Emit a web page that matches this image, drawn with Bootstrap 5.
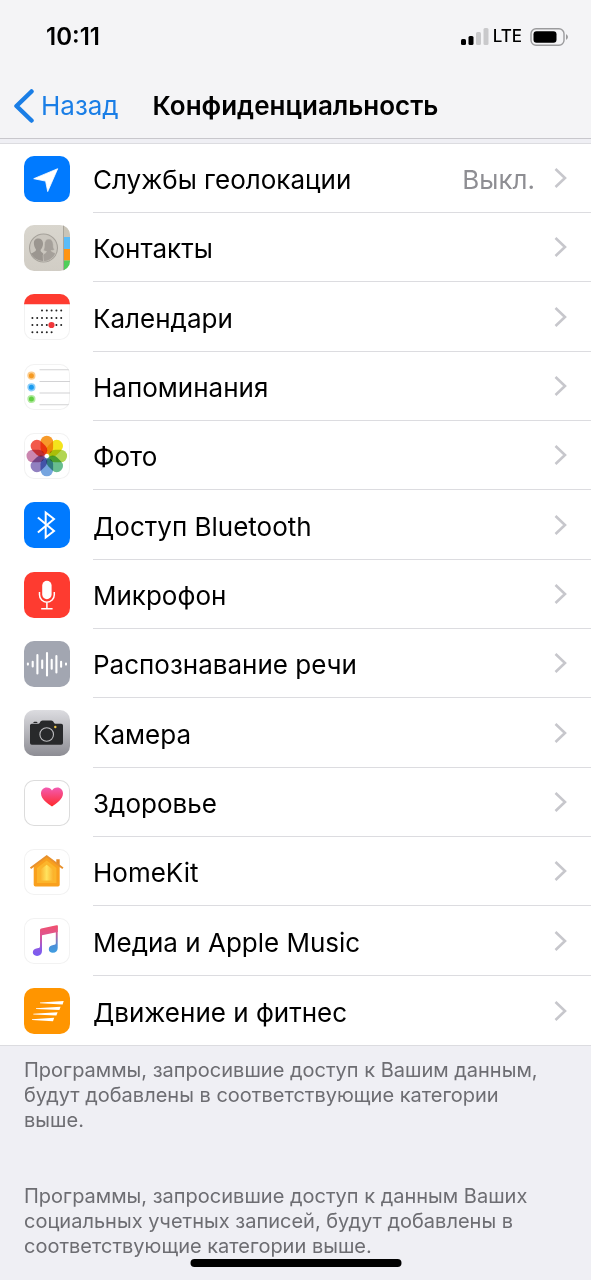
<!DOCTYPE html>
<html lang="ru">
<head>
<meta charset="utf-8">
<meta name="viewport" content="width=device-width, initial-scale=1">
<title>Конфиденциальность</title>
<link href="https://cdn.jsdelivr.net/npm/bootstrap@5.3.0/dist/css/bootstrap.min.css" rel="stylesheet">
<style>
  body { font-family: Inter, "Liberation Sans", sans-serif; background: #efeff4; color: #000; }
  .top-bar { background: #f4f4f6; border-bottom: 1px solid #c8c7cc; }
  .status { height: 73px; padding: 0 22px 0 46px; font-size: 24px; font-weight: 600; }
  .network { font-size: 17px; font-weight: 500; }
  .title-bar { display: grid; grid-template-columns: 1fr auto 1fr; height: 65px; padding: 0 14px; }
  .back { color: #1a7ee6; font-size: 26px; gap: 7px; }
  .title-bar h1 { font-size: 26px; font-weight: 600; }
  .settings { margin-top: 4px; border-top: 1px solid #dcdce0; border-bottom: 1px solid #dcdce0; background: #fff; }
  .settings a { height: 69px; padding-left: 24px; gap: 23px; font-size: 26px; color: #000; }
  .settings li:nth-child(3n) a { height: 70px; }
  .settings svg { display: block; }
  .entry { border-bottom: 1px solid #dcdce0; padding-right: 24px; gap: 19px; }
  .entry > span { padding-top: 3px; }
  li:last-child .entry { border-bottom: 0; }
  .state { color: #8e8e93; }
  .app-icon { width: 46px; height: 46px; border-radius: 10px; overflow: hidden; }
  .outlined { box-shadow: inset 0 0 0 1px #f2f2f2; }
  .outlined-dark { box-shadow: inset 0 0 0 1px #dcdcdc; }
  .notes { padding: 12px 40px 20px 24px; font-size: 20px; line-height: 25px; color: #6d6d72; }
  .notes p { margin-bottom: 51px; }
  .notes p:last-child { margin-bottom: 0; }
  .home-indicator { bottom: 13px; width: 211px; height: 8px; background: #000; }
</style>
</head>
<body>
<header class="top-bar">
  <div class="status d-flex align-items-center justify-content-between">
    <time>10:11</time>
    <div class="d-flex align-items-center gap-1">
      <svg width="28" height="18" viewBox="0 0 28 18" aria-hidden="true">
        <rect x="0" y="11" width="5" height="6" rx="1.5"/><rect x="7.500" y="8" width="5" height="9" rx="1.500"/>
        <g fill="#c9c9cb"><rect x="15" y="4" width="5" height="13" rx="1.500"/><rect x="22.500" y="0" width="5" height="17" rx="1.500"/></g>
      </svg>
      <span class="network">LTE</span>
      <svg class="ms-1" width="39" height="18" viewBox="0 0 39 18" aria-hidden="true">
        <rect x="1" y=".700" width="33" height="16.500" rx="5" fill="none" stroke="#9b9b9d" stroke-width="1.400"/>
        <rect x="3.500" y="3.200" width="23" height="11.500" rx="3"/>
        <path d="M36 6q4 3 0 6z" fill="#9b9b9d"/>
      </svg>
    </div>
  </div>
  <nav class="title-bar align-items-center">
    <a href="#" class="back d-flex align-items-center text-decoration-none">
      <svg width="20" height="34" viewBox="0 0 20 34" fill="none" stroke="#1a7ee6" stroke-width="4.500" stroke-linecap="round" stroke-linejoin="round" aria-hidden="true"><path d="M17.500 2.500 2.500 17l15 14.500"/></svg>
      <span>Назад</span>
    </a>
    <h1 class="m-0">Конфиденциальность</h1>
    <span></span>
  </nav>
</header>

<svg width="0" height="0" class="position-absolute" aria-hidden="true">
  <symbol id="chevron" viewBox="0 0 13 20"><path d="M1.500 1 11 10l-9.500 9" fill="none" stroke="#c7c7cc" stroke-width="2.600"/></symbol>
</svg>

<main>
<ul class="settings list-unstyled mb-0">
  <li><a href="#" class="d-flex align-items-center text-decoration-none">
    <svg class="app-icon" viewBox="0 0 46 46"><rect width="46" height="46" fill="#007aff"/><path d="M33.700 12.700 23.700 35.600 21.600 25.100 9.700 22.700z" fill="#fff" stroke="#fff" stroke-width=".8" stroke-linejoin="round"/></svg>
    <span class="entry d-flex align-items-center flex-grow-1 align-self-stretch"><span class="flex-grow-1">Службы геолокации</span><span class="state">Выкл.</span><svg width="13" height="20"><use href="#chevron"/></svg></span></a></li>
  <li><a href="#" class="d-flex align-items-center text-decoration-none">
    <svg class="app-icon" viewBox="0 0 46 46"><defs><linearGradient id="paper" x2="0" y2="1"><stop stop-color="#d9d6ce"/><stop offset="1" stop-color="#d1cdc5"/></linearGradient></defs>
      <rect width="46" height="46" fill="url(#paper)"/><path d="M40 0h6v12h-6z" fill="#c9c4b7"/><path d="M40 12h6v12h-6z" fill="#5bbcf8"/><path d="M40 24h6v11.500h-6z" fill="#ff9412"/><path d="M40 35.500h6V46h-6z" fill="#4fce5a"/><path d="M39.500 0v46" stroke="#aaa69c" stroke-width="1"/>
      <circle cx="19.500" cy="23" r="14" fill="#cbc7bf" stroke="#a5a19a" stroke-width="1.100"/>
      <path d="M14.500 13.500c-4 0-5 3-4.500 6 .3 2.500 1.500 4 2 5 .2 2-2.500 2.600-5 4 2 4 6 7 12 7.500l.5-7c-1.500-2-3-2-3-4 1.500-1.500 2.800-4 2.500-7-.3-3-2-4.500-4.500-4.500z" fill="#9b9690"/>
      <path d="M25 14c-3 0-4.500 2-4.500 5.500 0 3-.5 4.500-1 6l3 1c-.2 1.500-2.500 2-3.500 3.500l.5 6.500c6-.5 10-3.500 12-8-1.500-1.200-4-1.500-4.500-3 2 0 3-.5 3.500-1-1.500-1.500-1.200-3-1.300-5C29 16 27.500 14 25 14z" fill="#a5a09a" stroke="#cbc7bf" stroke-width=".5"/></svg>
    <span class="entry d-flex align-items-center flex-grow-1 align-self-stretch"><span class="flex-grow-1">Контакты</span><svg width="13" height="20"><use href="#chevron"/></svg></span></a></li>
  <li><a href="#" class="d-flex align-items-center text-decoration-none">
    <svg class="app-icon outlined" viewBox="0 0 46 46"><path d="M0 0h46v10.300H0z" fill="#fe3b30"/>
      <g fill="none" stroke="#222" stroke-width="2" stroke-linecap="round" stroke-dasharray="0 4.800"><path d="M18 16.600h20"/><path d="M8.400 24h29.500"/><path d="M8.400 31h29.500"/><path d="M8.400 38.300h20"/></g><circle cx="27.500" cy="31" r="3.100" fill="#f0373a"/></svg>
    <span class="entry d-flex align-items-center flex-grow-1 align-self-stretch"><span class="flex-grow-1">Календари</span><svg width="13" height="20"><use href="#chevron"/></svg></span></a></li>
  <li><a href="#" class="d-flex align-items-center text-decoration-none">
    <svg class="app-icon outlined" viewBox="0 0 46 46"><path d="M15.500 5.700H46M15.500 17.500H46M15.500 29H46M15.500 40.700H46" stroke="#d2d2d4" stroke-width="1.100"/>
      <g stroke-width="1.600"><circle cx="7.400" cy="11.700" r="3.300" fill="#f59a23" stroke="#fbcb8b"/><circle cx="7.400" cy="23.300" r="3.300" fill="#1c9cf0" stroke="#8bcdf8"/><circle cx="7.400" cy="35" r="3.300" fill="#62d043" stroke="#b2e9a0"/></g></svg>
    <span class="entry d-flex align-items-center flex-grow-1 align-self-stretch"><span class="flex-grow-1">Напоминания</span><svg width="13" height="20"><use href="#chevron"/></svg></span></a></li>
  <li><a href="#" class="d-flex align-items-center text-decoration-none">
    <svg class="app-icon outlined" viewBox="0 0 46 46"><defs><rect id="petal" x="-6.300" y="-20.300" width="12.600" height="18.300" rx="6.300"/></defs>
      <g transform="translate(22.800 23)"><use href="#petal" fill="#f79a2a" style="mix-blend-mode:multiply"/><use href="#petal" fill="#f4e41c" transform="rotate(45)" style="mix-blend-mode:multiply"/><use href="#petal" fill="#b2d552" transform="rotate(90)" style="mix-blend-mode:multiply"/><use href="#petal" fill="#68bd8e" transform="rotate(135)" style="mix-blend-mode:multiply"/><use href="#petal" fill="#76a5df" transform="rotate(180)" style="mix-blend-mode:multiply"/><use href="#petal" fill="#9180c0" transform="rotate(225)" style="mix-blend-mode:multiply"/><use href="#petal" fill="#cb86af" transform="rotate(270)" style="mix-blend-mode:multiply"/><use href="#petal" fill="#f2594b" transform="rotate(315)" style="mix-blend-mode:multiply"/><circle r="1.500" fill="#fff"/></g></svg>
    <span class="entry d-flex align-items-center flex-grow-1 align-self-stretch"><span class="flex-grow-1">Фото</span><svg width="13" height="20"><use href="#chevron"/></svg></span></a></li>
  <li><a href="#" class="d-flex align-items-center text-decoration-none">
    <svg class="app-icon" viewBox="0 0 46 46"><rect width="46" height="46" fill="#007aff"/><path d="M13.900 15.500 30 29l-8.300 6.500V10.500L30 17 13.900 30.500" fill="none" stroke="#fff" stroke-width="2"/></svg>
    <span class="entry d-flex align-items-center flex-grow-1 align-self-stretch"><span class="flex-grow-1">Доступ Bluetooth</span><svg width="13" height="20"><use href="#chevron"/></svg></span></a></li>
  <li><a href="#" class="d-flex align-items-center text-decoration-none">
    <svg class="app-icon" viewBox="0 0 46 46"><rect width="46" height="46" fill="#fe3b30"/><rect x="18.200" y="8.800" width="9.400" height="18.400" rx="4.700" fill="#fff"/><path d="M15.500 20v2.800a7.400 7.400 0 0 0 14.800 0V20M22.900 30v6.500M17.200 36.800h11.400" fill="none" stroke="#fff" stroke-width="1.500"/></svg>
    <span class="entry d-flex align-items-center flex-grow-1 align-self-stretch"><span class="flex-grow-1">Микрофон</span><svg width="13" height="20"><use href="#chevron"/></svg></span></a></li>
  <li><a href="#" class="d-flex align-items-center text-decoration-none">
    <svg class="app-icon" viewBox="0 0 46 46"><rect width="46" height="46" fill="#a2a6b1"/><path d="M3.900 22.600v1M8.700 20.800v4.600M13.400 14v18.500M18.200 19.500v7.500M23 12v22.500M27.700 18.800v9M32.400 15v16.500M37.100 20.800v5M42 22.600v1" fill="none" stroke="#fff" stroke-width="2.100" stroke-linecap="round"/></svg>
    <span class="entry d-flex align-items-center flex-grow-1 align-self-stretch"><span class="flex-grow-1">Распознавание речи</span><svg width="13" height="20"><use href="#chevron"/></svg></span></a></li>
  <li><a href="#" class="d-flex align-items-center text-decoration-none">
    <svg class="app-icon" viewBox="0 0 46 46"><defs><linearGradient id="steel" x2="0" y2="1"><stop stop-color="#dcdce0"/><stop offset="1" stop-color="#8d8d94"/></linearGradient></defs>
      <rect width="46" height="46" fill="url(#steel)"/><path d="M6 15.500q0-1.800 1.800-1.800h6.700c1.500 0 1.500-3.200 4-3.200h8.700c2.500 0 2.500 3.200 4 3.200h6q1.800 0 1.800 1.800v17.400q0 1.800-1.800 1.800H7.800Q6 34.700 6 32.900zM9.300 13q0-1.200 1.200-1.200h1.800q1.200 0 1.200 1.200z" fill="#28292b"/><circle cx="22.700" cy="24.500" r="6.800" fill="none" stroke="#bdbdc0" stroke-width="1.100"/><circle cx="31.300" cy="17" r="1.200" fill="#efc84a"/></svg>
    <span class="entry d-flex align-items-center flex-grow-1 align-self-stretch"><span class="flex-grow-1">Камера</span><svg width="13" height="20"><use href="#chevron"/></svg></span></a></li>
  <li><a href="#" class="d-flex align-items-center text-decoration-none">
    <svg class="app-icon outlined-dark" viewBox="0 0 46 46"><defs><linearGradient id="heart" x2="0" y2="1"><stop stop-color="#f35bb2"/><stop offset="1" stop-color="#ff2a2c"/></linearGradient></defs>
      <path d="M28 26.400c-4.500-3-11-7.500-11-13 0-3.500 2.500-6 5.700-6 2.300 0 4.300 1.200 5.300 3 1-1.800 3-3 5.300-3 3.200 0 5.700 2.500 5.700 6 0 5.500-6.500 10-11 13z" fill="url(#heart)"/></svg>
    <span class="entry d-flex align-items-center flex-grow-1 align-self-stretch"><span class="flex-grow-1">Здоровье</span><svg width="13" height="20"><use href="#chevron"/></svg></span></a></li>
  <li><a href="#" class="d-flex align-items-center text-decoration-none">
    <svg class="app-icon outlined" viewBox="0 0 46 46"><defs><linearGradient id="glow"><stop stop-color="#fbb02c"/><stop offset=".5" stop-color="#ffe35f"/><stop offset="1" stop-color="#fbb02c"/></linearGradient></defs>
      <path d="M32.300 10.300h3.400v8h-3.400z" fill="#e58a25"/><path d="M9.700 17 22.700 7l13 10v18.700q0 1.700-1.700 1.700H11.400q-1.700 0-1.700-1.700z" fill="#f9a01d"/><path d="M13 19 22.700 11.500 32.400 19v15H13z" fill="#fcb52b"/><path d="M16 21l6.700-5.200 6.700 5.200v10.500H16z" fill="url(#glow)"/><path d="M6.500 19.300 22.700 7.300l16.200 12" fill="none" stroke="#e8912d" stroke-width="2"/></svg>
    <span class="entry d-flex align-items-center flex-grow-1 align-self-stretch"><span class="flex-grow-1">HomeKit</span><svg width="13" height="20"><use href="#chevron"/></svg></span></a></li>
  <li><a href="#" class="d-flex align-items-center text-decoration-none">
    <svg class="app-icon outlined" viewBox="0 0 46 46"><defs><linearGradient id="tuneA" gradientUnits="userSpaceOnUse" x1="0" y1="8" x2="0" y2="37"><stop stop-color="#f0506e"/><stop offset=".35" stop-color="#dc5596"/><stop offset=".8" stop-color="#8a5be6"/><stop offset="1" stop-color="#7a5cf0"/></linearGradient><linearGradient id="tuneB" gradientUnits="userSpaceOnUse" x1="0" y1="8" x2="0" y2="34"><stop stop-color="#f0506e"/><stop offset=".3" stop-color="#c95b9b"/><stop offset=".75" stop-color="#4c8fd8"/><stop offset="1" stop-color="#3f9ce0"/></linearGradient></defs>
      <path d="M31.800 9 33.700 7.300V30c0 3-2 4.700-4.900 4.700-2.500 0-4-1.500-4-3.500 0-2.500 2-3.800 4.500-4.100 1.700-.2 2.500-.5 2.500-2z" fill="url(#tuneB)"/><path d="M16 12q0-1.300 1.300-1.600l15.200-3.100q1.200-.2 1.200 1V14L18 17.300V33c0 3-1.800 4.900-5 4.900-2.500 0-4.200-1.500-4.200-3.600 0-2.500 2-3.800 4.500-4.100 2-.2 2.700-.5 2.700-2.200z" fill="url(#tuneA)"/></svg>
    <span class="entry d-flex align-items-center flex-grow-1 align-self-stretch"><span class="flex-grow-1">Медиа и Apple Music</span><svg width="13" height="20"><use href="#chevron"/></svg></span></a></li>
  <li><a href="#" class="d-flex align-items-center text-decoration-none">
    <svg class="app-icon" viewBox="0 0 46 46"><rect width="46" height="46" fill="#ff9500"/><path d="M16 14.400 39.700 13l-1.100 3.400L16 15.200zM12 20.300l24.600-1.600-1.200 3.400L12 21.100zM9.300 25.700l24.300-1.500-1.200 3.400-23.100-1.100zM8 31.200l22.200-1.500-1.200 3.500L8 32z" fill="#fff"/></svg>
    <span class="entry d-flex align-items-center flex-grow-1 align-self-stretch"><span class="flex-grow-1">Движение и фитнес</span><svg width="13" height="20"><use href="#chevron"/></svg></span></a></li>
</ul>
<section class="notes">
  <p>Программы, запросившие доступ к Вашим данным, будут добавлены в соответствующие категории выше.</p>
  <p>Программы, запросившие доступ к данным Ваших социальных учетных записей, будут добавлены в соответствующие категории выше.</p>
</section>
</main>
<div class="home-indicator position-fixed start-50 translate-middle-x rounded-pill"></div>
<script src="https://cdn.jsdelivr.net/npm/bootstrap@5.3.0/dist/js/bootstrap.bundle.min.js"></script>
</body>
</html>
